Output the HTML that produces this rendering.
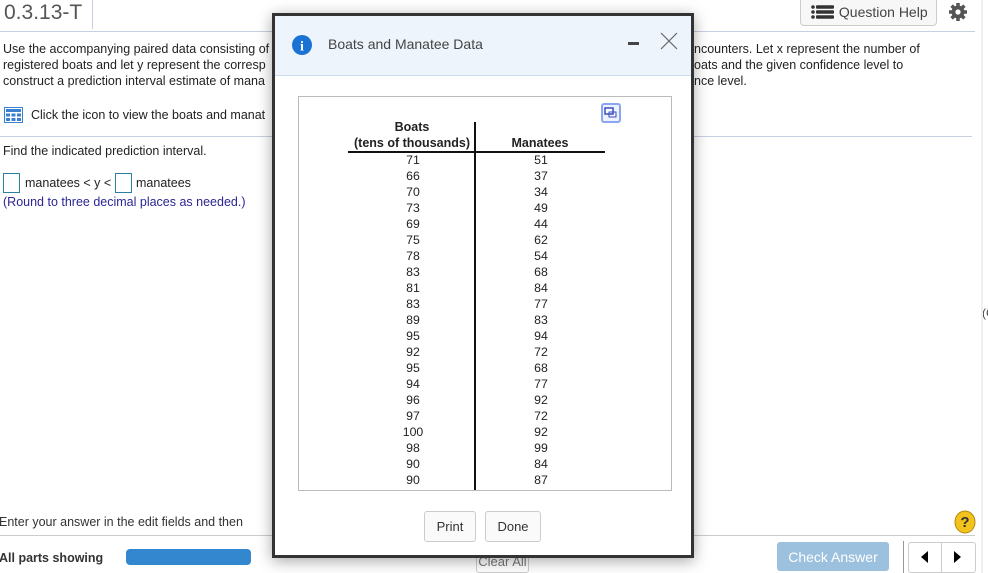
<!DOCTYPE html>
<html><head><style>
*{margin:0;padding:0;box-sizing:border-box}
body{width:988px;height:573px;position:relative;overflow:hidden;background:#fff;font-family:"Liberation Sans",Arial,sans-serif;color:#222}
.a{position:absolute;white-space:nowrap}
.t{font-size:12.5px;line-height:16px}
.row{position:absolute;font-size:12.3px;line-height:16px;text-align:center}
</style></head><body>
<div class="a" style="left:4px;top:1px;font-size:21px;color:#555">0.3.13-T</div>
<div class="a" style="left:92px;top:0;width:1px;height:29px;background:#ccd"></div>
<div class="a" style="left:0;top:31px;width:975px;height:1px;background:#c8cfe0"></div>
<div class="a" style="left:800px;top:0;width:137px;height:26px;border:1px solid #ccc;border-top:none;border-radius:0 0 4px 4px;background:#f7f7f7;font-size:14px;color:#444;padding:4px 0 0 10px">
<svg width="24" height="14" style="vertical-align:-2px"><g fill="#333"><circle cx="2" cy="2" r="1.8"/><circle cx="2" cy="7" r="1.8"/><circle cx="2" cy="12" r="1.8"/><rect x="5" y="0.3" width="18" height="3.4" rx="1"/><rect x="5" y="5.3" width="18" height="3.4" rx="1"/><rect x="5" y="10.3" width="18" height="3.4" rx="1"/></g></svg> Question Help</div>
<svg class="a" style="left:948px;top:2px" width="20" height="20" viewBox="0 0 20 20"><g fill="#555"><circle cx="10" cy="10" r="6.5"/><g stroke="#555" stroke-width="3.5"><path d="M10 1V19M1 10H19M3.6 3.6L16.4 16.4M16.4 3.6L3.6 16.4"/></g></g><circle cx="10" cy="10" r="2.6" fill="#fff"/></svg>
<div class="a t" style="left:3px;top:41px">Use the accompanying paired data consisting of<br>registered boats and let y represent the corresp<br>construct a prediction interval estimate of mana</div>
<div class="a t" style="left:694px;top:41px">ncounters. Let x represent the number of<br>oats and the given confidence level to<br>nce level.</div>
<svg class="a" style="left:4px;top:107px" width="19" height="16"><rect x="0.5" y="0.5" width="18" height="15" fill="#fff" stroke="#3a80d0"/><g fill="#3a80d0"><rect x="2" y="2" width="15" height="3"/><rect x="2" y="6.5" width="4" height="3"/><rect x="7.5" y="6.5" width="4" height="3"/><rect x="13" y="6.5" width="4" height="3"/><rect x="2" y="11" width="4" height="3"/><rect x="7.5" y="11" width="4" height="3"/><rect x="13" y="11" width="4" height="3"/></g></svg>
<div class="a t" style="left:31px;top:107px">Click the icon to view the boats and manat</div>
<div class="a" style="left:0;top:136px;width:972px;height:1px;background:#c8cfe0"></div>
<div class="a t" style="left:3px;top:143px">Find the indicated prediction interval.</div>
<div class="a" style="left:3px;top:173px;width:17px;height:20px;border:1px solid #2a7fa0"></div>
<div class="a t" style="left:25px;top:175px">manatees &lt; y &lt;</div>
<div class="a" style="left:115px;top:173px;width:17px;height:20px;border:1px solid #2a7fa0"></div>
<div class="a t" style="left:136px;top:175px">manatees</div>
<div class="a t" style="left:3px;top:194px;color:#2b2596">(Round to three decimal places as needed.)</div>
<div class="a t" style="left:-1px;top:514px;color:#333">Enter your answer in the edit fields and then</div>
<div class="a" style="left:0;top:535px;width:975px;height:1px;background:#ccc"></div>
<div class="a t" style="left:-1px;top:550px;font-weight:bold;color:#333">All parts showing</div>
<div class="a" style="left:126px;top:549px;width:125px;height:16px;border-radius:4px;background:#3387cf"></div>
<div class="a" style="left:476px;top:548px;width:53px;height:25px;border:1px solid #ccc;border-radius:3px;font-size:13px;color:#777;text-align:center;padding-top:5px">Clear All</div>
<div class="a" style="left:777px;top:542px;width:112px;height:29px;border-radius:3px;background:#9bc1de;color:#fff;font-size:14px;text-align:center;padding-top:7px">Check Answer</div>
<div class="a" style="left:903px;top:541px;width:1px;height:32px;background:#999"></div>
<div class="a" style="left:908px;top:542px;width:68px;height:31px;border:1px solid #ccc;border-radius:3px"></div>
<div class="a" style="left:941px;top:543px;width:1px;height:29px;background:#ccc"></div>
<svg class="a" style="left:919px;top:550px" width="12" height="14"><path d="M9 1L2 7L9 13Z" fill="#000"/></svg>
<svg class="a" style="left:951px;top:550px" width="12" height="14"><path d="M3 1L10 7L3 13Z" fill="#000"/></svg>
<svg class="a" style="left:954px;top:510px" width="22" height="24"><ellipse cx="11" cy="12" rx="10" ry="11" fill="#f3c21c" stroke="#b08a10"/><text x="11" y="17" font-size="15" font-weight="bold" text-anchor="middle" fill="#333" font-family="Liberation Sans">?</text></svg>
<div class="a" style="left:982px;top:306px;font-size:12px;color:#444">(C</div>
<div class="a" style="left:981px;top:0;width:2px;height:573px;background:#f0f0f0"></div>

<!-- modal -->
<div class="a" style="left:272px;top:13px;width:422px;height:545px;border:3px solid #333;background:#fff;box-shadow:0 3px 14px rgba(0,0,0,.35)">
<div class="a" style="left:0;top:0;width:416px;height:60px;background:#eef4fc;border-bottom:1px solid #c8dcee"></div>
<svg class="a" style="left:17px;top:19px" width="20" height="20"><circle cx="10" cy="10" r="10" fill="#1a73d4"/><text x="10" y="15.5" font-size="14" font-weight="bold" text-anchor="middle" fill="#fff" font-family="Liberation Serif">i</text></svg>
<div class="a" style="left:53px;top:20px;font-size:14px;color:#444">Boats and Manatee Data</div>
<div class="a" style="left:353px;top:26px;width:11px;height:3px;background:#444"></div>
<svg class="a" style="left:385px;top:16px" width="18" height="18"><path d="M1 1L17 17M17 1L1 17" stroke="#666" stroke-width="1.2"/></svg>
<div class="a" style="left:23px;top:80px;width:374px;height:395px;border:1px solid #bbb"></div>
<div class="a" style="left:326px;top:87px;width:20px;height:20px;border:2px solid #8aa6f0;border-radius:3px;background:#eef2ff"></div>
<svg class="a" style="left:329px;top:90px" width="14" height="14"><rect x="1" y="2" width="8" height="6" fill="#fff" stroke="#3a4cbf" stroke-width="1.5"/><rect x="5" y="6" width="7" height="5" fill="none" stroke="#3a4cbf"/></svg>
<div class="a" style="left:74px;top:103px;width:126px;text-align:center;font-size:12.5px;font-weight:bold;line-height:16px">Boats<br>(tens of thousands)</div>
<div class="a" style="left:200px;top:119px;width:130px;text-align:center;font-size:12.5px;font-weight:bold;line-height:16px">Manatees</div>
<div class="a" style="left:73px;top:135px;width:257px;height:2px;background:#111"></div>
<div class="a" style="left:199px;top:106px;width:2px;height:368px;background:#111"></div>
<div class="row" style="left:76px;top:136px;width:124px">71<br>66<br>70<br>73<br>69<br>75<br>78<br>83<br>81<br>83<br>89<br>95<br>92<br>95<br>94<br>96<br>97<br>100<br>98<br>90<br>90</div>
<div class="row" style="left:201px;top:136px;width:130px">51<br>37<br>34<br>49<br>44<br>62<br>54<br>68<br>84<br>77<br>83<br>94<br>72<br>68<br>77<br>92<br>72<br>92<br>99<br>84<br>87</div>
<div class="a" style="left:149px;top:495px;width:52px;height:31px;border:1px solid #ccc;border-radius:3px;background:#fafafa;font-size:13px;color:#333;text-align:center;padding-top:7px">Print</div>
<div class="a" style="left:210px;top:495px;width:56px;height:31px;border:1px solid #ccc;border-radius:3px;background:#fafafa;font-size:13px;color:#333;text-align:center;padding-top:7px">Done</div>
</div>
</body></html>
